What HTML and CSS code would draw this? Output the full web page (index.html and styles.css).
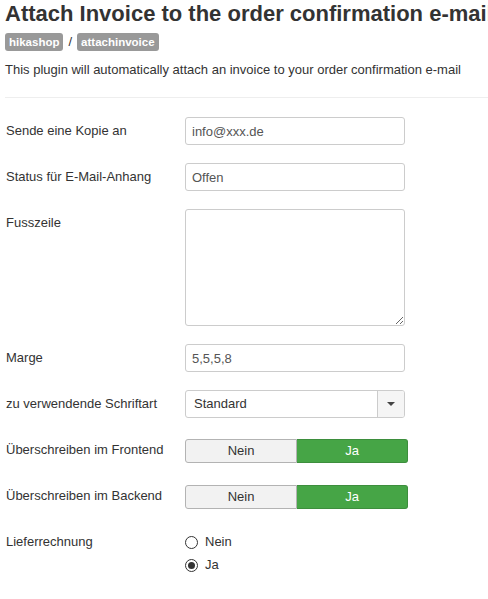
FILE: index.html
```html
<!doctype html>
<html lang="de">

<head>
	<meta charset="UTF-8">
	<title>Attach Invoice</title>
	<link rel="stylesheet" href="styles.css">
</head>

<body>
	<div id="page">
		<div class="head">
			<h1 class="title">Attach Invoice to the order confirmation e-mail</h1>
		</div>
		<div class="crumbs">
			<span class="badge">hikashop</span>
			<span class="sep">/</span>
			<span class="badge">attachinvoice</span>
		</div>
		<p class="desc">This plugin will automatically attach an invoice to your order confirmation e-mail</p>
		<hr class="line">

		<form class="form">
			<div class="row">
				<label class="label">Sende eine Kopie an</label>
				<div class="controls"><input class="field" type="text" value="info@xxx.de"></div>
			</div>
			<div class="row">
				<label class="label">Status für E-Mail-Anhang</label>
				<div class="controls"><input class="field" type="text" value="Offen"></div>
			</div>
			<div class="row">
				<label class="label">Fusszeile</label>
				<div class="controls"><textarea class="field area"></textarea></div>
			</div>
			<div class="row">
				<label class="label">Marge</label>
				<div class="controls"><input class="field" type="text" value="5,5,5,8"></div>
			</div>
			<div class="row">
				<label class="label">zu verwendende Schriftart</label>
				<div class="controls">
					<div class="select">
						<span class="select-text">Standard</span>
						<span class="select-arrow"><i class="caret"></i></span>
					</div>
				</div>
			</div>
			<div class="row">
				<label class="label">Überschreiben im Frontend</label>
				<div class="controls switch">
					<div class="toggle">
						<span class="btn">Nein</span>
						<span class="btn on">Ja</span>
					</div>
				</div>
			</div>
			<div class="row">
				<label class="label">Überschreiben im Backend</label>
				<div class="controls switch">
					<div class="toggle">
						<span class="btn">Nein</span>
						<span class="btn on">Ja</span>
					</div>
				</div>
			</div>
			<div class="row">
				<label class="label">Lieferrechnung</label>
				<div class="controls">
					<div class="radio"><i class="dot"></i>Nein</div>
					<div class="radio"><i class="dot checked"></i>Ja</div>
				</div>
			</div>
		</form>
	</div>
</body>

</html>
```

FILE: styles.css
```css
* {
	padding: 0;
	margin: 0;
	box-sizing: border-box;
}

body {
	background: #fff;
	overflow: hidden;
	font-family: "Liberation Sans", Arial, sans-serif;
	font-size: 13px;
	line-height: 18px;
	color: #333;
}

#page {
	padding: 0 0 0 5px;
}

.head {
	overflow: hidden;
}

.title {
	font-size: 22px;
	line-height: 28px;
	font-weight: bold;
	color: #333;
	white-space: nowrap;
}

.crumbs {
	margin-top: 5px;
	display: flex;
	align-items: center;
	gap: 5px;
}

.badge {
	background: #999;
	color: #fff;
	font-weight: bold;
	font-size: 11.5px;
	line-height: 18px;
	padding: 0 4px;
	border-radius: 3px;
}

.sep {
	font-size: 13px;
}

.desc {
	margin-top: 10px;
}

.line {
	border: 0;
	border-top: 1px solid #eee;
	margin: 18px 0 19px 0;
}

.row {
	display: flex;
	margin-bottom: 18px;
}

.label {
	width: 180px;
	padding-top: 5px;
	padding-left: 1px;
}

.field {
	display: block;
	width: 220px;
	height: 28px;
	padding: 4px 6px;
	border: 1px solid #ccc;
	border-radius: 3px;
	font-family: "Liberation Sans", Arial, sans-serif;
	font-size: 13px;
	color: #555;
	background: #fff;
	outline: none;
}

.area {
	height: 117px;
	resize: both;
}

.select {
	display: flex;
	width: 220px;
	height: 28px;
	border: 1px solid #ccc;
	border-radius: 3px;
	overflow: hidden;
}

.select-text {
	flex: 1;
	padding: 4px 8px;
	color: #333;
}

.select-arrow {
	width: 27px;
	border-left: 1px solid #ccc;
	background: #f5f5f5;
	display: flex;
	align-items: center;
	justify-content: center;
}

.caret {
	width: 0;
	height: 0;
	border-left: 4px solid transparent;
	border-right: 4px solid transparent;
	border-top: 4px solid #444;
}

.switch {
	height: 28px;
	padding-top: 3px;
}

.toggle {
	display: flex;
	width: 223px;
	height: 24px;
}

.btn {
	flex: 1;
	text-align: center;
	line-height: 22px;
	border: 1px solid #b3b3b3;
	background: #f2f2f2;
	color: #333;
	border-radius: 3px 0 0 3px;
}

.btn.on {
	background: #46a546;
	border-color: #3d8e3d;
	color: #fff;
	border-radius: 0 3px 3px 0;
	border-left: 0;
}

.radio {
	display: flex;
	align-items: center;
	gap: 7px;
	padding-top: 5px;
	height: 23px;
	font-size: 13px;
}

.dot {
	width: 13px;
	height: 13px;
	border: 1px solid #333;
	border-radius: 50%;
	display: flex;
	align-items: center;
	justify-content: center;
}

.dot.checked::after {
	content: "";
	width: 7px;
	height: 7px;
	border-radius: 50%;
	background: #333;
}
```
